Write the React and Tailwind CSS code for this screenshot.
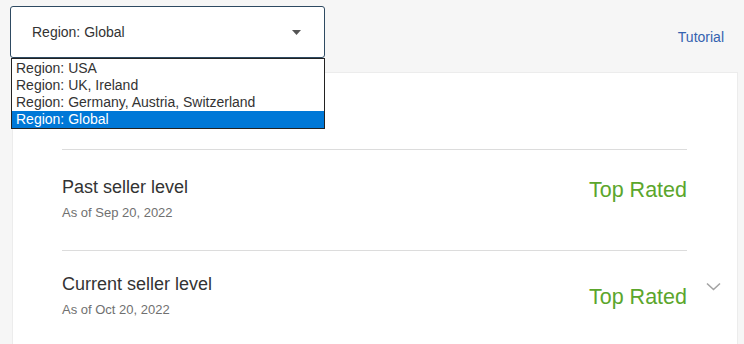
/**
 * Seller level panel with an open region dropdown.
 */

const REGIONS = [
  'Region: USA',
  'Region: UK, Ireland',
  'Region: Germany, Austria, Switzerland',
  'Region: Global',
]

function Chevron() {
  return (
    <svg width="15" height="9" viewBox="0 0 15 9" fill="none">
      <path d="M1 1.5 L7.5 7.5 L14 1.5" stroke="#a3a3a3" strokeWidth="1.6" />
    </svg>
  )
}

function LevelRow({ title, date, pt, rightMt, chevron }) {
  return (
    <div className="flex">
      <div className="flex-1 border-t border-[#dcdcdc] flex justify-between pb-[29px]" style={{ paddingTop: pt }}>
        <div>
          <div className="text-[18px] leading-[22px] text-[#333]">{title}</div>
          <div className="text-[13px] leading-[16px] text-[#707070] mt-[7px]">{date}</div>
        </div>
        <div className="text-[21.5px] leading-[26px] text-[#5ba62c]" style={{ marginTop: rightMt }}>
          Top Rated
        </div>
      </div>
      <div className="w-[33px] pl-[19px]">
        {chevron && <div className="mt-[32px]"><Chevron /></div>}
      </div>
    </div>
  )
}

export default function App() {
  return (
    <div className="relative h-[344px] w-[744px] overflow-hidden bg-[#f6f6f6] font-['Liberation_Sans',Arial,sans-serif]">
      {/* Header row */}
      <div className="flex items-start justify-between pt-[6px] pl-[10px] pr-[20px]">
        <div className="w-[315px] h-[52px] rounded-[3px] border border-[#2e4a62] bg-white flex items-center justify-between pl-[21px] pr-[23px]">
          <span className="text-[14px] text-[#333]">Region: Global</span>
          <svg width="9" height="5" viewBox="0 0 9 5">
            <path d="M0 0 L9 0 L4.5 5 Z" fill="#555" />
          </svg>
        </div>
        <a className="text-[14px] text-[#3462b0] mt-[21px]">Tutorial</a>
      </div>

      {/* Card */}
      <div className="ml-[12px] mr-[6px] mt-[14px] h-[300px] bg-white border border-[#ececec] pl-[49px] pr-[17px] pt-[76px]">
        <LevelRow title="Past seller level" date="As of Sep 20, 2022" pt={26} rightMt={1} />
        <LevelRow title="Current seller level" date="As of Oct 20, 2022" pt={22} rightMt={11} chevron />
      </div>

      {/* Open dropdown list */}
      <div className="absolute left-[11px] top-[58px] w-[314px] border border-[#222] bg-white pt-[1px]">
        {REGIONS.map((r, i) => (
          <div
            key={r}
            className={`h-[17px] leading-[17px] pl-[4px] text-[14px] ${
              i === REGIONS.length - 1 ? 'bg-[#0078d7] text-white' : 'text-[#333]'
            }`}
          >
            {r}
          </div>
        ))}
      </div>
    </div>
  )
}
